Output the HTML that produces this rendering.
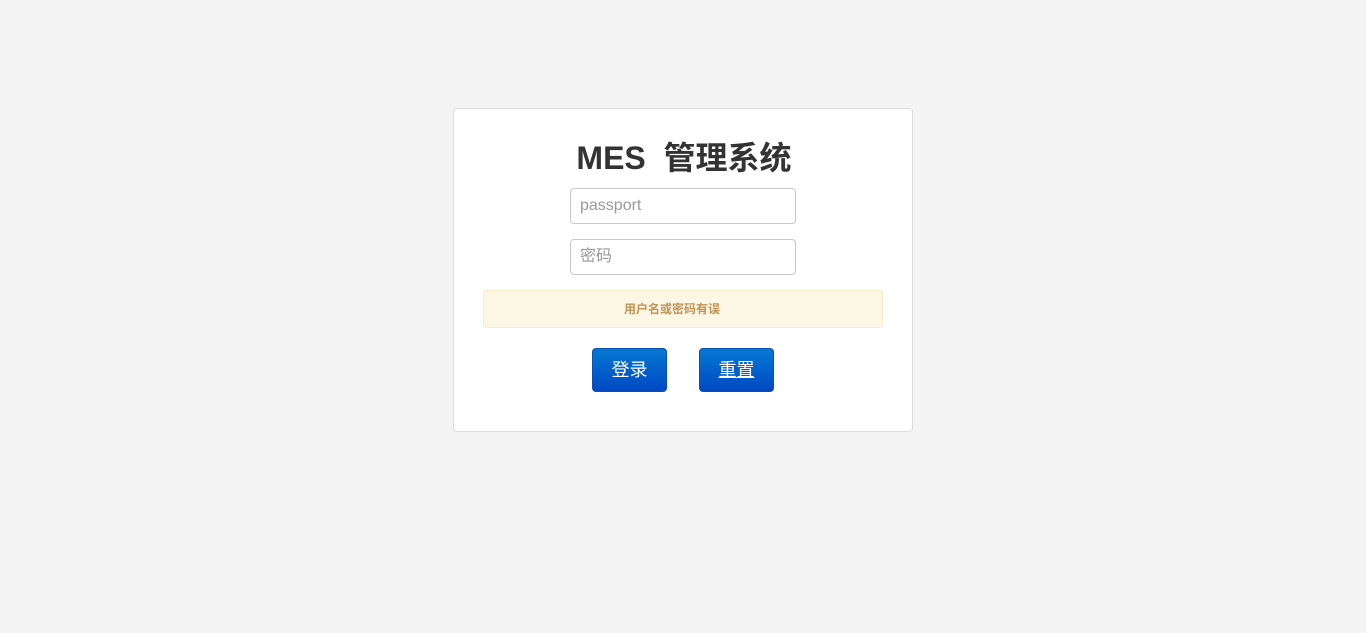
<!DOCTYPE html>
<html><head><meta charset="utf-8"><style>
body{margin:0;background:#f4f4f4;font-family:"Liberation Sans","Noto Sans CJK SC",sans-serif;width:1366px;height:633px;position:relative;overflow:hidden}
.card{position:absolute;left:453px;top:108px;width:458px;height:322px;background:#fff;border:1px solid #ddd;border-radius:4px}
h1{position:absolute;left:2px;right:0;top:137px;margin:0;text-align:center;font-size:32px;font-weight:bold;color:#333;line-height:42px}
.in{position:absolute;left:570px;border:1px solid #c8c8c8;border-radius:4px;background:#fff;box-sizing:border-box;width:226px;height:36px;color:#999;font-size:16px;line-height:34px;padding-left:9px}
.alert{position:absolute;left:483px;top:290px;width:400px;height:38px;box-sizing:border-box;padding-right:22px;background:#fcf6e4;border:1px solid #f8ebc9;border-radius:3px;text-align:center;color:#c09452;font-weight:bold;font-size:12px;line-height:36px}
.btn{position:absolute;top:348px;width:75px;height:44px;box-sizing:border-box;border-radius:4px;border:1px solid #0d4fb0;background:linear-gradient(#0479d3,#0048c4);color:#fff;font-size:18px;text-align:center;line-height:42px}
</style></head><body>
<div class="card"></div>
<h1>MES&nbsp; 管理系统</h1>
<div class="in" style="top:188px">passport</div>
<div class="in" style="top:239px">密码</div>
<div class="alert">用户名或密码有误</div>
<div class="btn" style="left:592px">登录</div>
<div class="btn" style="left:699px"><u>重置</u></div>
</body></html>
